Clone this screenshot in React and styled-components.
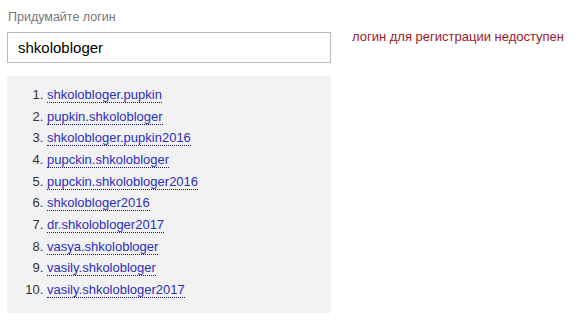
import React from "react";
import styled, { createGlobalStyle } from "styled-components";

const Global = createGlobalStyle`
  html, body { margin: 0; padding: 0; background: #fff; }
  body { font-family: Arial, "Liberation Sans", sans-serif; }
`;

const Page = styled.div`
  display: flex;
  align-items: flex-start;
  padding: 9px 0 0 7px;
  gap: 21px;
`;

const Column = styled.div`
  width: 324px;
  display: flex;
  flex-direction: column;
`;

const Label = styled.div`
  font-size: 12.5px;
  line-height: 17px;
  color: #777;
  padding-left: 1px;
  margin-bottom: 6px;
`;

const Input = styled.div`
  box-sizing: border-box;
  height: 31px;
  border: 1px solid #b9b9b9;
  padding: 0 10px;
  font-size: 15px;
  line-height: 29px;
  color: #000;
`;

const Suggestions = styled.ol`
  margin: 13px 0 0;
  padding: 8px 0 12px 40px;
  background: #f2f2f2;
  font-size: 13px;
  line-height: 21.67px;
  color: #333;
`;

const Item = styled.li``;

const Link = styled.a`
  color: #2d2dc0;
  text-decoration: none;
  border-bottom: 1px dotted #1a1a70;
`;

const Error = styled.div`
  margin-top: 19px;
  font-size: 13px;
  line-height: 18px;
  color: #9e1a28;
`;

const logins = [
  "shkolobloger.pupkin",
  "pupkin.shkolobloger",
  "shkolobloger.pupkin2016",
  "pupckin.shkolobloger",
  "pupckin.shkolobloger2016",
  "shkolobloger2016",
  "dr.shkolobloger2017",
  "vasya.shkolobloger",
  "vasily.shkolobloger",
  "vasily.shkolobloger2017",
];

export default function App() {
  return (
    <>
      <Global />
      <Page>
        <Column>
          <Label>Придумайте логин</Label>
          <Input>shkolobloger</Input>
          <Suggestions>
            {logins.map((l) => (
              <Item key={l}>
                <Link href="#">{l}</Link>
              </Item>
            ))}
          </Suggestions>
        </Column>
        <Error>логин для регистрации недоступен</Error>
      </Page>
    </>
  );
}
